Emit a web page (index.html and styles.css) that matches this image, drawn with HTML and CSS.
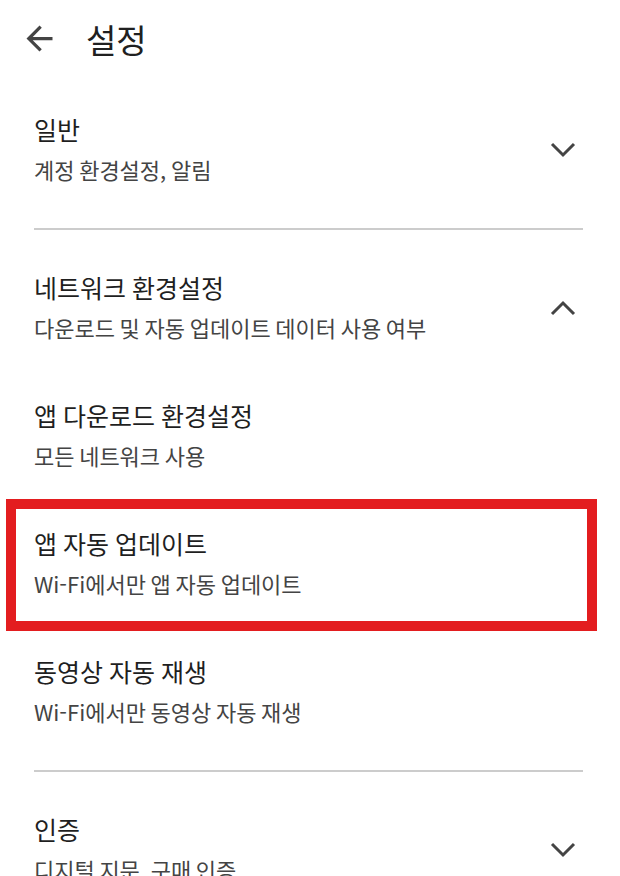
FILE: index.html
```
<!DOCTYPE html>
<html lang="ko">
<head>
    <meta charset="UTF-8">
    <meta name="viewport" content="width=device-width, initial-scale=1.0">
    <title>설정</title>
    <link rel="stylesheet" href="styles.css">
</head>
<body>

    <div class="top-bar">
        <button class="back-button">
            <svg width="39" height="39" viewBox="0 0 24 24">
                <path d="M20 11H7.83l5.59-5.59L12 4l-8 8 8 8 1.41-1.41L7.83 13H20v-2z" fill="#444"/>
            </svg>
        </button>
        <div class="page-title">설정</div>
    </div>

    <div class="setting-row">
        <div class="row-text">
            <div class="row-title">일반</div>
            <div class="row-sub">계정 환경설정, 알림</div>
        </div>
        <svg class="chevron" width="26" height="16" viewBox="0 0 26 16">
            <polyline points="2,2 13,13 24,2" fill="none" stroke="#444" stroke-width="3"/>
        </svg>
    </div>
    <div class="divider"></div>

    <div class="setting-row">
        <div class="row-text">
            <div class="row-title">네트워크 환경설정</div>
            <div class="row-sub">다운로드 및 자동 업데이트 데이터 사용 여부</div>
        </div>
        <svg class="chevron" width="26" height="16" viewBox="0 0 26 16">
            <polyline points="2,14 13,3 24,14" fill="none" stroke="#444" stroke-width="3"/>
        </svg>
    </div>
    <div class="setting-row">
        <div class="row-text">
            <div class="row-title">앱 다운로드 환경설정</div>
            <div class="row-sub">모든 네트워크 사용</div>
        </div>
    </div>
    <div class="setting-row highlighted">
        <div class="row-text">
            <div class="row-title">앱 자동 업데이트</div>
            <div class="row-sub">Wi-Fi에서만 앱 자동 업데이트</div>
        </div>
    </div>
    <div class="setting-row">
        <div class="row-text">
            <div class="row-title">동영상 자동 재생</div>
            <div class="row-sub">Wi-Fi에서만 동영상 자동 재생</div>
        </div>
    </div>
    <div class="divider"></div>

    <div class="setting-row">
        <div class="row-text">
            <div class="row-title">인증</div>
            <div class="row-sub">디지털 지문, 구매 인증</div>
        </div>
        <svg class="chevron" width="26" height="16" viewBox="0 0 26 16">
            <polyline points="2,2 13,13 24,2" fill="none" stroke="#444" stroke-width="3"/>
        </svg>
    </div>

</body>
</html>
```

FILE: styles.css
```
* {
    margin: 0;
    padding: 0;
    box-sizing: border-box;
}

body {
    width: 620px;
    height: 876px;
    font-family: "Noto Sans CJK KR", "Noto Sans", sans-serif;
    background-color: #fff;
    color: #1f1f1f;
    overflow: hidden;
}

.top-bar {
    height: 79px;
    display: flex;
    align-items: center;
    padding-left: 20px;
    padding-bottom: 2px;
}

.back-button {
    background: none;
    border: none;
    width: 39px;
    height: 39px;
    display: flex;
}

.page-title {
    margin-left: 27px;
    font-size: 33px;
    line-height: 40px;
    color: #202020;
}

.setting-row {
    position: relative;
    height: 128px;
    display: flex;
    align-items: center;
    justify-content: space-between;
    padding: 11px 34px 0;
}

.row-title {
    font-size: 25px;
    line-height: 32px;
    word-spacing: -1px;
    color: #1f1f1f;
}

.row-sub {
    margin-top: 9px;
    font-size: 22px;
    line-height: 30px;
    word-spacing: -1.5px;
    color: #444;
}

.chevron {
    margin-top: 3px;
    margin-right: 10px;
}

.divider {
    height: 2px;
    margin: 21px 37px 7px 34px;
    background-color: #ccc;
}

/* red annotation box around the row */
.highlighted::after {
    content: "";
    position: absolute;
    top: 6px;
    bottom: -10px;
    left: 6px;
    right: 23px;
    border: 10px solid #e31d1f;
}
```
